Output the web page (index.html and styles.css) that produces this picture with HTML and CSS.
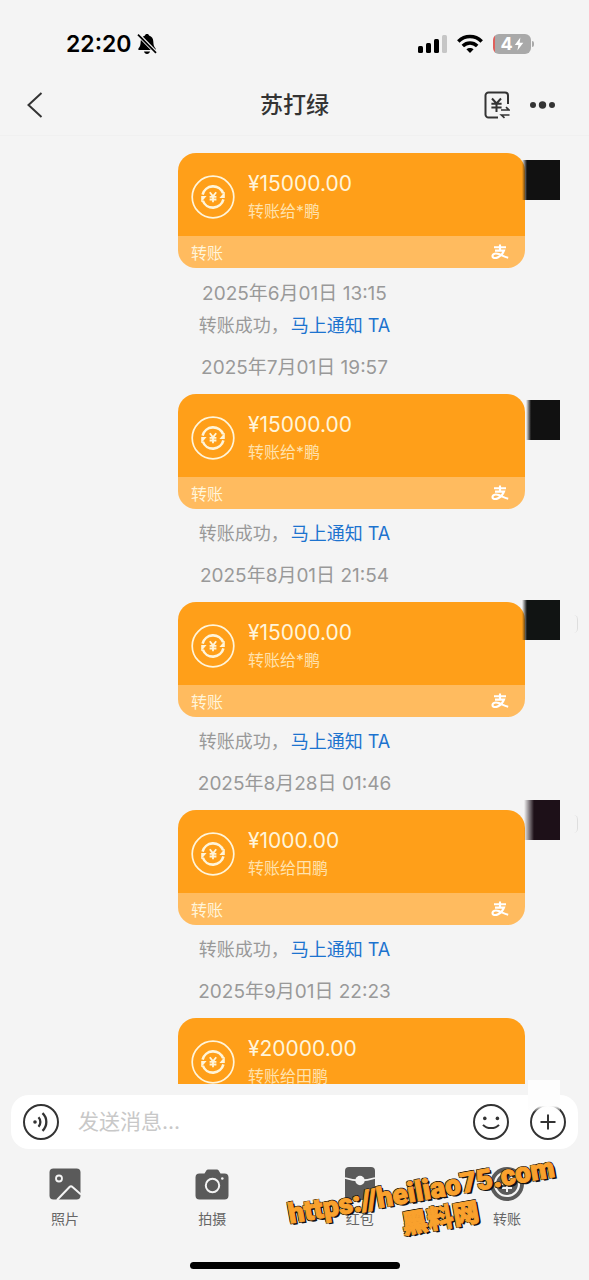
FILE: index.html
```html
<!DOCTYPE html>
<html lang="zh-CN">
<head>
<meta charset="utf-8">
<meta name="viewport" content="width=device-width, initial-scale=1">
<title>苏打绿</title>
<link rel="stylesheet" href="styles.css">
</head>
<body>
<svg class="defs" aria-hidden="true">
  <symbol id="transfer" viewBox="0 0 44 44">
    <circle cx="22" cy="22" r="20.8" fill="none" stroke="currentColor" stroke-width="1.7"/>
    <path d="M11.6 19.6A10.8 10.8 0 0 1 32.2 18.4M32.4 24.4A10.8 10.8 0 0 1 11.8 25.6" fill="none" stroke="currentColor" stroke-width="2.6"/>
    <path d="M33.8 16.8V23H28.4ZM10.2 27.2V21H15.600Z" fill="currentColor"/>
    <path d="M18.8 17.2L22 21.4L25.2 17.2M22 21.4V27.2M18.6 21.8H25.4M18.6 24.5H25.4" fill="none" stroke="currentColor" stroke-width="1.8"/>
  </symbol>
  <symbol id="alipay" viewBox="0 0 18 18">
    <path d="M3 4.300H15M9 1.4V7.6M4 7.600H13C12 10.200 9.9 12.8 7.1 14.300C4.800 15.500 1.500 15.400 1.500 13C1.500 10.400 5 10 7.8 11.1C10.7 12.2 13.4 14 17.200 14.800" fill="none" stroke="currentColor" stroke-width="2.100"/>
  </symbol>
</svg>

<header class="header">
  <div class="status">
    <span class="clock">22:20</span>
    <svg class="bell" viewBox="0 0 20 22">
      <path d="M10 1C11.3 1 11.8 1.6 12 2.4C15 3.2 16.2 5.6 16.3 8.6C16.4 12.6 17.2 14 18.6 15.6V17H1.4V15.6C2.8 14 3.6 12.6 3.7 8.6C3.8 5.6 5 3.2 8 2.4C8.2 1.6 8.7 1 10 1ZM7 18.6H13C12.6 20.2 11.6 21 10 21C8.4 21 7.4 20.2 7 18.6Z"/>
      <path d="M1 1.4L19 19.6" stroke="#f4f4f4" stroke-width="3.8"/>
      <path d="M1 1.6L19 19.8" stroke="#000" stroke-width="1.7"/>
    </svg>
    <span class="spacer"></span>
    <svg class="signal" viewBox="0 0 29 20">
      <rect x="0" y="12" width="5" height="7" rx="1.5"/><rect x="8" y="9" width="5" height="10" rx="1.5"/><rect x="16" y="5" width="5" height="14" rx="1.5"/><rect x="24" y="1" width="5" height="18" rx="1.5" fill="#c6c6c6"/>
    </svg>
    <svg class="wifi" viewBox="0 0 26 20" fill="none" stroke="#000" stroke-width="3.5">
      <path d="M1.3 7.4C8 .8 18 .8 24.7 7.4M5.8 12C10 8 16 8 20.2 12"/>
      <path d="M13 19L9.4 15.3C11.4 13.5 14.6 13.5 16.6 15.3Z" fill="#000" stroke="none"/>
    </svg>
    <span class="battery">4<svg viewBox="0 0 10 14"><path d="M6.4 .5L.8 8H4.4L3.4 13.5L9.3 5.8H5.6Z" fill="#fff"/></svg></span>
  </div>
  <nav class="nav">
    <button class="back" type="button" aria-label="返回"><svg viewBox="0 0 16 26"><path d="M14.5 1L1.5 13L14.5 25" fill="none" stroke="#333" stroke-width="2"/></svg></button>
    <h1>苏打绿</h1>
    <div class="actions">
      <button type="button" aria-label="账单"><svg class="bill" viewBox="0 0 26 28" fill="none" stroke="#333" stroke-width="2">
        <path d="M24 13V4.5A3 3 0 0 0 21 1.5H4.5A3 3 0 0 0 1.5 4.5V23.5A3 3 0 0 0 4.5 26.5H14M8 7.5L12.5 12.5L17 7.5M12.5 12.5V21M7.4 12.8H17.6M7.4 16.4H17.6"/>
        <path d="M17 19H25L22 16.2M25.5 24H17.5L20.5 26.8" stroke-width="1.7"/>
      </svg></button>
      <button type="button" aria-label="更多"><svg class="dots" viewBox="0 0 25 8" fill="#333"><circle cx="3" cy="4" r="3"/><circle cx="12.5" cy="4" r="3.7"/><circle cx="22" cy="4" r="3"/></svg></button>
    </div>
  </nav>
</header>

<main class="chat">
  <article class="card">
    <div class="card-body"><svg class="coin"><use href="#transfer"/></svg><div><strong>¥15000.00</strong><p>转账给*鹏</p></div></div>
    <footer>转账<svg class="ali"><use href="#alipay"/></svg></footer>
    <span class="mask mask-a"></span>
  </article>
  <time>2025年6月01日 13:15</time>
  <p class="notice">转账成功，<a href="#notify">马上通知 TA</a></p>
  <time>2025年7月01日 19:57</time>
  <article class="card">
    <div class="card-body"><svg class="coin"><use href="#transfer"/></svg><div><strong>¥15000.00</strong><p>转账给*鹏</p></div></div>
    <footer>转账<svg class="ali"><use href="#alipay"/></svg></footer>
    <span class="mask mask-b"></span>
  </article>
  <p class="notice">转账成功，<a href="#notify">马上通知 TA</a></p>
  <time>2025年8月01日 21:54</time>
  <article class="card">
    <div class="card-body"><svg class="coin"><use href="#transfer"/></svg><div><strong>¥15000.00</strong><p>转账给*鹏</p></div></div>
    <footer>转账<svg class="ali"><use href="#alipay"/></svg></footer>
    <span class="mask mask-c"></span>
  </article>
  <p class="notice">转账成功，<a href="#notify">马上通知 TA</a></p>
  <time>2025年8月28日 01:46</time>
  <article class="card">
    <div class="card-body"><svg class="coin"><use href="#transfer"/></svg><div><strong>¥1000.00</strong><p>转账给田鹏</p></div></div>
    <footer>转账<svg class="ali"><use href="#alipay"/></svg></footer>
    <span class="mask mask-d"></span>
  </article>
  <p class="notice">转账成功，<a href="#notify">马上通知 TA</a></p>
  <time>2025年9月01日 22:23</time>
  <article class="card">
    <div class="card-body"><svg class="coin"><use href="#transfer"/></svg><div><strong>¥20000.00</strong><p>转账给田鹏</p></div></div>
  </article>
</main>

<section class="bottom">
  <form class="composer">
    <button type="button" aria-label="语音"><svg viewBox="0 0 36 36" fill="none" stroke="#333" stroke-width="2">
      <circle cx="18" cy="18" r="17"/><circle cx="12" cy="18" r="1.8" fill="#333" stroke="none"/>
      <path d="M15.500 13.2C18 15.8 18 20.2 15.500 22.8M19.500 9.200C24.6 14 24.6 22 19.500 26.8" stroke-width="2.300"/></svg></button>
    <input type="text" aria-label="发送消息" placeholder="发送消息...">
    <button type="button" aria-label="表情"><svg viewBox="0 0 36 36" fill="none" stroke="#333" stroke-width="2">
      <circle cx="18" cy="18" r="17"/><circle cx="11.8" cy="14.4" r="1.8" fill="#333" stroke="none"/><circle cx="24.4" cy="14.4" r="1.8" fill="#333" stroke="none"/>
      <path d="M10 20.8C14 25.2 22 25.2 26 20.8"/></svg></button>
    <button type="button" aria-label="添加"><svg viewBox="0 0 36 36" fill="none" stroke="#333" stroke-width="2">
      <circle cx="18" cy="18" r="17"/><path d="M18 10.5V25.5M10.5 18H25.5"/></svg></button>
    <span class="patch"></span>
  </form>
  <div class="tools">
    <button type="button"><svg viewBox="0 0 34 34">
      <rect x="1.5" y="1.5" width="31" height="31" rx="4" fill="#5a5a5a"/>
      <circle cx="11" cy="11.5" r="3" fill="none" stroke="#f4f4f4" stroke-width="1.8"/>
      <path d="M9 33L21.5 20Q23 18.500 24.500 20L33 27.500" fill="none" stroke="#f4f4f4" stroke-width="2"/></svg>照片</button>
    <button type="button"><svg viewBox="0 0 34 34">
      <path d="M4.500 6.500H9.500L11.500 3.200Q12 2.400 13 2.400H22Q23 2.400 23.500 3.200L25.500 6.500H29.500A4 4 0 0 1 33.500 10.500V28.500A4 4 0 0 1 29.500 32.500H4.500A4 4 0 0 1 .500 28.500V10.500A4 4 0 0 1 4.500 6.500Z" fill="#5a5a5a"/>
      <circle cx="17.500" cy="18.500" r="6.700" fill="none" stroke="#f4f4f4" stroke-width="2"/><circle cx="27.300" cy="11.500" r="1.300" fill="#f4f4f4"/></svg>拍摄</button>
    <button type="button"><svg viewBox="0 0 34 34">
      <rect x="2" y="0" width="30" height="33" rx="4" fill="#5a5a5a"/>
      <path d="M2 11Q17 16 32 11" fill="none" stroke="#f4f4f4" stroke-width="1.800"/><circle cx="17" cy="13.500" r="4.700" fill="#f4f4f4"/></svg>红包</button>
    <button type="button"><svg viewBox="0 0 34 34">
      <circle cx="17" cy="17" r="17" fill="#5a5a5a"/><circle cx="17" cy="17" r="12" fill="none" stroke="#f4f4f4" stroke-width="2.200"/>
      <path d="M12 10L17 16L22 10M17 16V25M12 17H22M12 21H22" fill="none" stroke="#f4f4f4" stroke-width="2"/></svg>转账</button>
  </div>
  <div class="home"></div>
  <div class="watermark"><span>https://heiliao75.com</span><span class="site">黑料网</span></div>
</section>
</body>
</html>
```
FILE: styles.css
```css
* { box-sizing: border-box; }
html, body { height: 100%; }
body {
  margin: 0;
  display: flex;
  flex-direction: column;
  background: #f4f4f4;
  color: #333;
  font-family: Inter, "Noto Sans CJK SC", sans-serif;
  overflow: hidden;
}
h1, p { margin: 0; }
svg { display: block; flex: none; }
.defs { position: absolute; width: 0; height: 0; }
button {
  border: 0;
  padding: 0;
  background: none;
  color: inherit;
  font: inherit;
}
.header { flex: none; border-bottom: 1px solid #f0f0f0; }
.status {
  display: flex;
  align-items: center;
  height: 75px;
  padding: 12px 58px 0 66px;
}
.clock {
  margin-right: 5px;
  color: #000;
  font-size: 23px;
  font-weight: 600;
  line-height: 30px;
}
.bell { width: 20px; height: 22px; }
.spacer { flex: 1; }
.signal { width: 29px; height: 20px; margin-right: 10px; }
.wifi { width: 26px; height: 20px; margin-right: 10px; }
.battery {
  position: relative;
  display: flex;
  align-items: center;
  justify-content: center;
  gap: 1px;
  width: 38px;
  height: 20px;
  border-radius: 6px;
  background: linear-gradient(90deg, #e0605c 2px, #a9a9a9 2px);
  color: #fff;
  font-size: 18px;
  font-weight: 700;
}
.battery svg { width: 10px; height: 14px; }
.battery::after {
  content: "";
  position: absolute;
  right: -3px;
  top: 7px;
  width: 2px;
  height: 6px;
  border-radius: 0 2px 2px 0;
  background: #a9a9a9;
}
.nav {
  display: grid;
  grid-template-columns: 1fr auto 1fr;
  align-items: center;
  height: 60px;
  padding: 0 27px;
}
.back svg { width: 16px; height: 26px; }
.nav h1 { font-size: 23px; font-weight: 500; line-height: 32px; }
.actions {
  display: flex;
  align-items: center;
  justify-content: flex-end;
  gap: 20px;
  padding-right: 7px;
}
.bill { width: 26px; height: 28px; }
.dots { width: 25px; height: 8px; }

.chat {
  flex: 1;
  min-height: 0;
  overflow: hidden;
  display: flex;
  flex-direction: column;
  padding-top: 17px;
}
.chat > * { flex: none; }
time, .notice {
  color: #999;
  font-size: 18px;
  line-height: 30px;
  text-align: center;
}
time { margin-top: 12px; font-size: 19px; }
.notice { margin-top: 10px; }
.card + time, time + .card { margin-top: 11px; }
time + .notice { margin-top: 2px; }
.notice a { margin-left: 2px; color: #1c73cf; text-decoration: none; }
.card {
  position: relative;
  margin: 0 64px 0 178px;
  color: #fff5da;
}
.card-body {
  display: flex;
  align-items: center;
  gap: 13px;
  height: 83px;
  padding: 4px 13px 0;
  border-radius: 18px 18px 0 0;
  background: #ff9f19;
}
.coin { width: 44px; height: 44px; }
.card strong { display: block; font-size: 21px; font-weight: 400; line-height: 28px; }
.card p { font-size: 16px; line-height: 26px; color: #ffe2ad; }
.card footer {
  display: flex;
  align-items: center;
  justify-content: space-between;
  height: 32px;
  padding: 0 16px 0 13px;
  border-radius: 0 0 18px 18px;
  background: #ffbb5f;
  font-size: 16px;
}
.ali { width: 18px; height: 18px; color: #fff; }
.mask {
  position: absolute;
  right: -35px;
  width: 38px;
  height: 40px;
  background: linear-gradient(90deg, transparent, #111 5px);
}
.mask-a { top: 7px; }
.mask-b { top: 6px; width: 34px; }
.mask-c { top: -2px; background: linear-gradient(90deg, transparent, #111413 5px); }
.mask-d { top: -10px; width: 36px; background: linear-gradient(90deg, transparent, #1d1018 10px); }
.mask-c::after, .mask-d::after {
  content: "";
  position: absolute;
  right: -18px;
  top: 15px;
  width: 8px;
  height: 18px;
  border-right: 1px solid #dedede;
  border-radius: 8px;
}

.bottom { position: relative; flex: none; padding-top: 11px; }
.composer {
  position: relative;
  display: flex;
  align-items: center;
  gap: 21px;
  height: 54px;
  margin: 0 11px;
  padding: 0 12px;
  border-radius: 18px;
  background: #fff;
}
.composer svg { width: 36px; height: 36px; }
.composer input {
  flex: 1;
  min-width: 0;
  padding: 0;
  margin-left: -2px;
  border: 0;
  outline: 0;
  background: none;
  font: inherit;
  font-size: 21px;
  line-height: 30px;
}
.composer input::placeholder { color: #c8c8c8; }
.patch {
  position: absolute;
  top: -15px;
  right: 18px;
  width: 32px;
  height: 32px;
  background: linear-gradient(#fdfdfd 26px, rgba(253, 253, 253, 0));
}
.tools {
  display: flex;
  justify-content: space-between;
  padding: 18px 65px 0 48px;
}
.tools button {
  display: flex;
  flex-direction: column;
  align-items: center;
  gap: 6px;
  width: 34px;
  color: #666;
  font-size: 14px;
  line-height: 24px;
  white-space: nowrap;
}
.tools svg { width: 34px; height: 34px; }
.home {
  width: 210px;
  height: 7px;
  margin: 31px auto 11px;
  border-radius: 4px;
  background: #000;
}
.watermark {
  position: absolute;
  right: 30px;
  bottom: 44px;
  display: flex;
  flex-direction: column;
  align-items: center;
  transform: rotate(-10deg);
  color: #f9a12d;
  font-family: Roboto, "Noto Sans CJK SC", sans-serif;
  font-size: 28px;
  font-weight: 900;
  line-height: 30px;
  white-space: nowrap;
  -webkit-text-stroke: 1px #f9a12d;
  text-shadow: -1px -1px 0 #111, 1px -1px 0 #111, -1px 1px 0 #111, 2px 2px 0 #111;
}
.site { padding-left: 28px; font-size: 26px; }
```
